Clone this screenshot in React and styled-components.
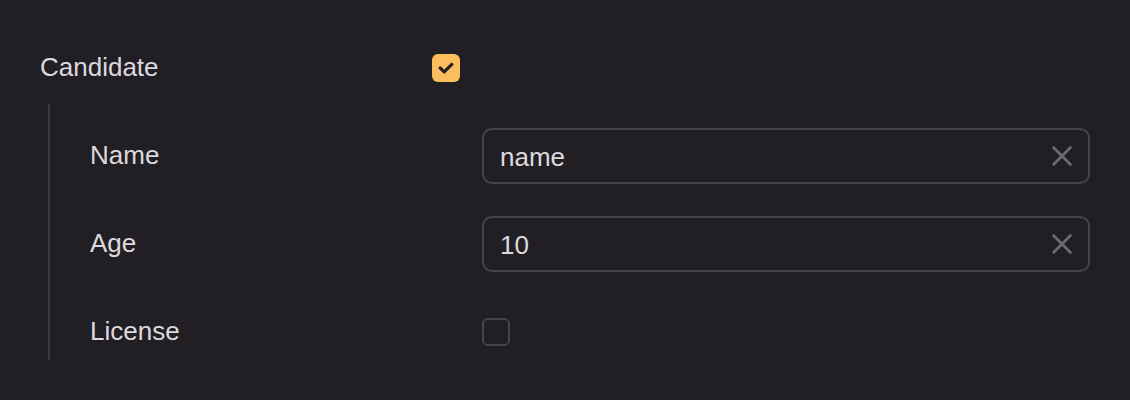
import React from "react";
import styled, { createGlobalStyle } from "styled-components";

const Global = createGlobalStyle`
  html, body { margin: 0; padding: 0; background: #221f24; }
  body { font-family: "Liberation Sans", Arial, sans-serif; }
`;

const Page = styled.div`
  width: 1130px;
  height: 400px;
  box-sizing: border-box;
  padding: 40px 40px 0 40px;
  background: #221f24;
  color: #dcd9de;
  font-size: 26px;
`;

const Row = styled.div`
  display: flex;
  align-items: center;
  height: 56px;
`;

const Label = styled.div`
  width: 392px;
  flex: none;
  line-height: 30px;
  padding-bottom: 2px;
`;

const Group = styled.div`
  margin: 8px 0 0 8px;
  padding: 24px 0 0 40px;
  border-left: 2px solid #3c393e;
  display: flex;
  flex-direction: column;
  gap: 32px;
`;

const Box = styled.div`
  width: 28px;
  height: 28px;
  box-sizing: border-box;
  border-radius: 6px;
  display: flex;
  align-items: center;
  justify-content: center;
  background: ${(p) => (p.$checked ? "#fcbd5c" : "transparent")};
  border: ${(p) => (p.$checked ? "none" : "2px solid #48454a")};
`;

const Field = styled.div`
  flex: 1;
  height: 56px;
  box-sizing: border-box;
  border: 2px solid #48454a;
  border-radius: 10px;
  display: flex;
  align-items: center;
  padding: 0 14px 0 16px;
`;

const Value = styled.div`
  flex: 1;
  color: #dcd9de;
  line-height: 30px;
  padding-top: 2px;
`;

const Clear = styled.div`
  width: 24px;
  height: 24px;
  display: flex;
  align-items: center;
  justify-content: center;
`;

const Check = () => (
  <svg width="16" height="16" viewBox="0 0 16 16">
    <path d="M2.2 8 L6.2 11.8 L13.8 4.4" fill="none" stroke="#231f22" strokeWidth="3.2" strokeLinecap="round" strokeLinejoin="round" />
  </svg>
);

const XIcon = () => (
  <svg width="24" height="24" viewBox="0 0 24 24">
    <path d="M3.5 3.5 L20.5 20.5 M20.5 3.5 L3.5 20.5" stroke="#6d6a70" strokeWidth="2.6" strokeLinecap="round" />
  </svg>
);

const Checkbox = ({ checked }) => <Box $checked={checked}>{checked && <Check />}</Box>;

const Input = ({ value }) => (
  <Field>
    <Value>{value}</Value>
    <Clear>
      <XIcon />
    </Clear>
  </Field>
);

export default function App() {
  return (
    <>
      <Global />
      <Page>
        <Row>
          <Label>Candidate</Label>
          <Checkbox checked />
        </Row>
        <Group>
          <Row>
            <Label>Name</Label>
            <Input value="name" />
          </Row>
          <Row>
            <Label>Age</Label>
            <Input value="10" />
          </Row>
          <Row>
            <Label>License</Label>
            <Checkbox />
          </Row>
        </Group>
      </Page>
    </>
  );
}
